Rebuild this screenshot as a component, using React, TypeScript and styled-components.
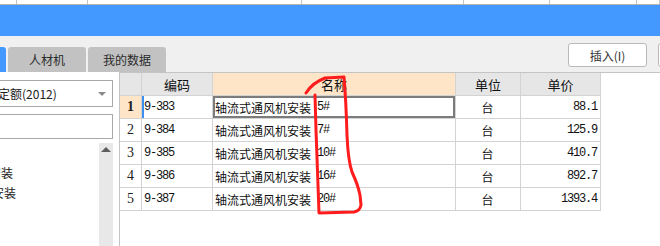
import React from 'react';
import styled, { createGlobalStyle } from 'styled-components';

type Row = {
  code: string;
  name: string;
  spec: string;
  unit: string;
  price: string;
};

const rows: Row[] = [
  { code: '9-383', name: '轴流式通风机安装', spec: '5#', unit: '台', price: '88.1' },
  { code: '9-384', name: '轴流式通风机安装', spec: '7#', unit: '台', price: '125.9' },
  { code: '9-385', name: '轴流式通风机安装', spec: '10#', unit: '台', price: '410.7' },
  { code: '9-386', name: '轴流式通风机安装', spec: '16#', unit: '台', price: '892.7' },
  { code: '9-387', name: '轴流式通风机安装', spec: '20#', unit: '台', price: '1393.4' }
];

const CJK = `"Noto Sans CJK SC", "Liberation Sans", sans-serif`;
const MONO = `"Liberation Mono", "Noto Sans CJK SC", monospace`;
const LINE = '#d3d3d3';

const GlobalStyle = createGlobalStyle`
  html, body {
    margin: 0;
    padding: 0;
    background: #ffffff;
    overflow: hidden;
  }
  body {
    font-family: ${CJK};
    font-size: 12px;
    color: #111;
  }
`;

const Page = styled.div`
  position: relative;
  width: 660px;
  height: 246px;
  display: flex;
  flex-direction: column;
  overflow: hidden;
`;

const TopStrip = styled.div`
  height: 4px;
  display: grid;
  grid-template-columns: 17px 71px 214px 162px 86px 87px 1fr;
  border-bottom: 1px solid #b4b4b4;
  background: #fff;
`;

const StripCell = styled.div`
  border-right: 1px solid #c4c4c4;
`;

const BlueBar = styled.div`
  height: 31px;
  background: #4399ff;
`;

const Toolbar = styled.div`
  height: 36px;
  background: #f0f0f0;
  display: flex;
  justify-content: space-between;
`;

const Tabs = styled.div`
  display: flex;
  align-items: flex-end;
  gap: 2px;
`;

const Tab = styled.div<{ $active?: boolean }>`
  width: 78px;
  height: 25px;
  box-sizing: border-box;
  border-radius: 3px 3px 0 0;
  background: ${p => (p.$active ? '#4399ff' : '#c2c2c2')};
  color: #2a2a2a;
  display: flex;
  align-items: center;
  justify-content: center;
  font-size: 12px;
  &:first-child {
    margin-left: -72px;
  }
`;

const Buttons = styled.div`
  display: flex;
  gap: 11px;
  padding-top: 7px;
  margin-right: -77px;
`;

const Button = styled.div`
  width: 79px;
  height: 24px;
  box-sizing: border-box;
  border: 1px solid #b9b9b9;
  border-radius: 3px;
  background: #fff;
  display: flex;
  align-items: center;
  justify-content: center;
  font-size: 12px;
  color: #333;
`;

const Main = styled.div`
  flex: 1;
  display: flex;
  min-height: 0;
`;

const LeftPanel = styled.div`
  width: 120px;
  box-sizing: border-box;
  border-right: 1px solid #c4c4c4;
  background: #fff;
  display: flex;
  flex-direction: column;
  overflow: hidden;
`;

const Field = styled.div<{ $top: number; $height: number }>`
  position: relative;
  margin-top: ${p => p.$top}px;
  margin-left: -30px;
  width: 143px;
  height: ${p => p.$height}px;
  box-sizing: border-box;
  border: 1px solid #a9a9a9;
  background: #fff;
  display: flex;
  align-items: center;
  padding-left: 27px;
  font-size: 12px;
  color: #222;
  white-space: nowrap;
`;

const Caret = styled.span`
  position: absolute;
  right: 6px;
  top: 11px;
  width: 0;
  height: 0;
  border-left: 4px solid transparent;
  border-right: 4px solid transparent;
  border-top: 4px solid #8a8a8a;
`;

const TreeArea = styled.div`
  flex: 1;
  display: flex;
  margin-top: 4px;
`;

const TreeList = styled.div`
  width: 99px;
  padding-top: 20px;
  overflow: hidden;
`;

const TreeItem = styled.div<{ $end: number }>`
  height: 20px;
  line-height: 20px;
  white-space: nowrap;
  margin-left: ${p => p.$end - 48}px;
  font-size: 12px;
  color: #222;
`;

const ScrollTrack = styled.div`
  width: 14px;
  background: #e8e8e8;
`;

const ScrollUp = styled.div`
  height: 12px;
  display: flex;
  align-items: center;
  justify-content: center;
  &::after {
    content: '';
    width: 0;
    height: 0;
    border-left: 5px solid transparent;
    border-right: 5px solid transparent;
    border-bottom: 5px solid #5e5e5e;
  }
`;

const TableArea = styled.div`
  flex: 1;
  background: #fff;
  border-top: 1px solid #c4c4c4;
`;

const Grid = styled.div`
  display: grid;
  grid-template-columns: 22px 71px 243px 65px 80px;
  width: 481px;
`;

const HeadCell = styled.div<{ $accent?: boolean }>`
  height: 23px;
  box-sizing: border-box;
  border-right: 1px solid ${LINE};
  border-bottom: 1px solid ${LINE};
  background: ${p => (p.$accent ? '#ffe5c7' : '#e6e6e6')};
  display: flex;
  align-items: center;
  justify-content: center;
  font-size: 13px;
  color: #111;
`;

const NumCell = styled.div<{ $current?: boolean }>`
  height: 23px;
  box-sizing: border-box;
  border-right: 1px solid ${LINE};
  border-bottom: 1px solid ${LINE};
  background: ${p => (p.$current ? '#ffe5c7' : '#fff')};
  display: flex;
  align-items: center;
  justify-content: center;
  font-family: "Liberation Serif", serif;
  font-weight: ${p => (p.$current ? 700 : 400)};
  font-size: 14px;
  color: #222;
`;

const Cell = styled.div<{ $align?: 'left' | 'center' | 'right'; $mono?: boolean; $focus?: boolean; $mark?: boolean }>`
  height: 23px;
  box-sizing: border-box;
  border-right: 1px solid ${LINE};
  border-bottom: 1px solid ${LINE};
  display: flex;
  align-items: center;
  justify-content: ${p => (p.$align === 'right' ? 'flex-end' : p.$align === 'center' ? 'center' : 'flex-start')};
  padding: 0 3px 0 2px;
  white-space: nowrap;
  overflow: hidden;
  font-family: ${p => (p.$mono ? MONO : CJK)};
  font-size: 12px;
  letter-spacing: ${p => (p.$mono ? '-1.2px' : '0')};
  color: #111;
  box-shadow: ${p =>
    p.$focus ? 'inset 0 0 0 2px #7c7c7c' : p.$mark ? 'inset 2px 0 0 #3d8ef0' : 'none'};
`;

const Spec = styled.span`
  font-family: ${MONO};
  letter-spacing: -1.2px;
  margin-left: 6px;
`;

const Scribble = styled.svg`
  position: absolute;
  left: 0;
  top: 0;
  pointer-events: none;
`;

export default function App() {
  return (
    <Page>
      <GlobalStyle />
      <TopStrip>
        {Array.from({ length: 7 }).map((_, i) => (
          <StripCell key={i} />
        ))}
      </TopStrip>
      <BlueBar />
      <Toolbar>
        <Tabs>
          <Tab $active />
          <Tab>人材机</Tab>
          <Tab>我的数据</Tab>
        </Tabs>
        <Buttons>
          <Button>插入(I)</Button>
          <Button />
        </Buttons>
      </Toolbar>
      <Main>
        <LeftPanel>
          <Field $top={8} $height={27}>
            定额(2012)
            <Caret />
          </Field>
          <Field $top={7} $height={25} />
          <TreeArea>
            <TreeList>
              <TreeItem $end={13}>风机安装</TreeItem>
              <TreeItem $end={16}>风机安装</TreeItem>
            </TreeList>
            <ScrollTrack>
              <ScrollUp />
            </ScrollTrack>
          </TreeArea>
        </LeftPanel>
        <TableArea>
          <Grid>
            <HeadCell />
            <HeadCell>编码</HeadCell>
            <HeadCell $accent>名称</HeadCell>
            <HeadCell>单位</HeadCell>
            <HeadCell>单价</HeadCell>
            {rows.map((r, i) => (
              <React.Fragment key={r.code}>
                <NumCell $current={i === 0}>{i + 1}</NumCell>
                <Cell $mono $mark={i === 0}>{r.code}</Cell>
                <Cell $focus={i === 0}>
                  {r.name}
                  <Spec>{r.spec}</Spec>
                </Cell>
                <Cell $align="center">{r.unit}</Cell>
                <Cell $align="right" $mono>{r.price}</Cell>
              </React.Fragment>
            ))}
          </Grid>
        </TableArea>
      </Main>
      <Scribble width="660" height="246" viewBox="0 0 660 246">
        <path
          d="M306 93 Q312 83 325 78 L344 77 Q346 100 347 135 Q348 160 352 172 Q358 185 360 195 L361 205 Q360 211 354 212 L319 213 L318 185 Q317 160 316 130 L315 95"
          fill="none"
          stroke="#ff1c1c"
          strokeWidth="3"
          strokeLinecap="round"
          strokeLinejoin="round"
        />
      </Scribble>
    </Page>
  );
}
